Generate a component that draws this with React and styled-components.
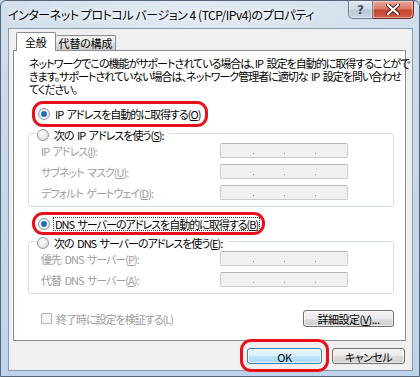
import { Fragment } from 'react';
import styled, { createGlobalStyle } from 'styled-components';

const GlobalStyle = createGlobalStyle`
  html, body {
    margin: 0;
    padding: 0;
    background: #c2d5ea;
  }
  body {
    font-family: "Noto Sans CJK JP", "Noto Sans", sans-serif;
    font-size: 11px;
    font-feature-settings: "palt";
    letter-spacing: -1px;
    word-spacing: 2px;
    color: #000;
  }
  * { box-sizing: border-box; }
`

const Window = styled.div`
  width: 420px;
  height: 377px;
  display: flex;
  flex-direction: column;
  border: 1px solid #55667a;
  border-radius: 6px 6px 0 0;
  background: linear-gradient(180deg, #d3dfec 0%, #c9d9ea 30%, #bfd4ec 100%);
  padding: 0 6px 5px 7px;
`

const TitleBar = styled.div`
  height: 27px;
  display: flex;
  align-items: flex-start;
  background: linear-gradient(90deg, rgba(255,255,255,0) 0%, rgba(255,255,255,0.35) 45%, rgba(255,255,255,0.1) 80%, rgba(255,255,255,0) 100%);
  margin: 0 -6px 0 -7px;
  padding: 0 6px 0 7px;
`

const Title = styled.div`
  font-size: 12px;
  letter-spacing: -0.45px;
  word-spacing: 0;
  line-height: 27px;
  white-space: nowrap;
  text-shadow: 0 0 5px #fff, 0 0 8px #fff;
`

const Captions = styled.div`
  margin-left: auto;
  margin-right: -1px;
  display: flex;
  height: 18px;
`

const CapButton = styled.div`
  width: ${p => p.$w}px;
  height: 18px;
  display: flex;
  align-items: center;
  justify-content: center;
  border: 1px solid ${p => p.$red ? '#6e2a22' : '#6b7a8c'};
  border-top: none;
  border-left-width: ${p => p.$red ? 0 : 1}px;
  border-radius: ${p => p.$red ? '0 0 5px 0' : '0 0 0 5px'};
  background: ${p => p.$red
    ? 'linear-gradient(180deg, #e8a89c 0%, #d77b69 45%, #c2452e 55%, #d35f43 100%)'
    : 'linear-gradient(180deg, #e3eaf2 0%, #cfd9e5 45%, #b9c7d6 55%, #c9d6e3 100%)'};
  box-shadow: inset 0 0 0 1px rgba(255,255,255,0.45);
  color: #44505e;
  font-family: "DejaVu Sans", sans-serif;
  font-weight: bold;
  font-size: 12px;
  letter-spacing: 0;
`

const Client = styled.div`
  flex: 1;
  display: flex;
  flex-direction: column;
  background: #f0f0f0;
  border: 1px solid #8a99ab;
  padding: 3px 6px 0 4px;
`

const TabsRow = styled.div`
  height: 18px;
  display: flex;
  align-items: flex-end;
  padding-left: 3px;
`

const Tab = styled.div`
  position: relative;
  z-index: ${p => p.$active ? 1 : 0};
  height: ${p => p.$active ? 19 : 15}px;
  margin-bottom: ${p => p.$active ? -1 : 0}px;
  padding: 0 ${p => p.$active ? 8 : 3}px;
  display: flex;
  align-items: center;
  border: 1px solid #898c95;
  border-bottom: none;
  border-left-width: ${p => p.$active ? 1 : 0}px;
  border-radius: 2px 2px 0 0;
  background: ${p => p.$active ? '#fff' : 'linear-gradient(180deg, #f2f2f2 0%, #ebebeb 50%, #dddddd 51%, #cfcfcf 100%)'};
  letter-spacing: -0.2px;
  white-space: nowrap;
`

const Panel = styled.div`
  flex: 1;
  display: flex;
  flex-direction: column;
  background: #fff;
  border: 1px solid #898c95;
  padding: 6px 11px 0 14px;
`

const Description = styled.div`
  margin-left: 1px;
  line-height: 13px;
  white-space: nowrap;
`

const Highlight = styled.div`
  align-self: flex-start;
  display: flex;
  align-items: center;
  height: ${p => p.$h}px;
  margin: ${p => p.$m};
  padding: ${p => p.$pad};
  border: 3px solid #e8101a;
  border-radius: 11px;
`

const Option = styled.label`
  display: flex;
  align-items: center;
  gap: 4px;
  height: 12px;
  white-space: nowrap;
  color: ${p => p.$disabled ? '#9d9d9d' : '#000'};
`

const OptionText = styled.span`
  line-height: 12px;
  outline: ${p => p.$focus ? '1px dotted #333' : 'none'};
  outline-offset: 0;
  padding: 0 1px;
`

const Radio = styled.span`
  width: 12px;
  height: 12px;
  border-radius: 50%;
  flex: none;
  border: 1px solid #8e9aa5;
  background: ${p => p.$checked
    ? 'radial-gradient(circle, #2a7fd0 0%, #1b5fa8 30%, #6aaee6 42%, #f2f2f2 46%, #dcdcdc 100%)'
    : 'radial-gradient(circle at 40% 35%, #ffffff 0%, #eaeaea 50%, #cfcfcf 100%)'};
`

const Group = styled.div`
  display: flex;
  flex-direction: column;
  margin-top: 6px;
  border: 1px solid #d5dfe5;
  border-radius: 3px;
  padding: 0 0 6px 12px;
`

const Legend = styled.div`
  align-self: flex-start;
  margin: -5px 0 0 -4px;
  padding: 0 4px 0 0;
  background: #fff;
`

const Rows = styled.div`
  display: grid;
  grid-template-columns: 179px 128px;
  grid-auto-rows: 15px;
  row-gap: 6px;
  align-items: center;
  margin-top: 2px;
`

const FieldLabel = styled.span`
  color: #9d9d9d;
  white-space: nowrap;
  line-height: 12px;
`

const IpBox = styled.div`
  height: 15px;
  display: flex;
  align-items: flex-end;
  padding: 0 0 3px 2px;
  background: #f0f0f0;
  border: 1px solid #cbcbcb;
  border-top-color: #b5b5b5;
  border-radius: 2px;
`

const Octet = styled.span`
  width: 30px;
`

const Dot = styled.span`
  width: 1px;
  height: 1px;
  background: #8a8a8a;
`

const BottomRow = styled.div`
  display: flex;
  align-items: center;
  margin-top: 16px;
  height: 17px;
`

const CheckBox = styled.span`
  width: 11px;
  height: 11px;
  flex: none;
  border: 1px solid #b9b9b9;
  background: #f4f4f4;
`

const CheckLabel = styled.label`
  display: flex;
  align-items: center;
  gap: 4px;
  margin-left: 13px;
  color: #9d9d9d;
  white-space: nowrap;
`

const Button = styled.button`
  width: ${p => p.$w}px;
  height: ${p => p.$h}px;
  margin-left: ${p => p.$ml || 0};
  padding: 0;
  font: inherit;
  font-feature-settings: "palt";
  letter-spacing: -0.5px;
  color: #000;
  white-space: nowrap;
  border: 1px solid ${p => p.$default ? '#3c7fb1' : '#707070'};
  border-radius: 3px;
  background: ${p => p.$default
    ? 'linear-gradient(180deg, #eaf6fd 0%, #d9f0fc 50%, #bee6fd 51%, #a7d9f5 100%)'
    : 'linear-gradient(180deg, #f2f2f2 0%, #ebebeb 50%, #dddddd 51%, #cfcfcf 100%)'};
  box-shadow: inset 0 0 0 1px ${p => p.$default ? 'rgba(255,255,255,0.7)' : 'rgba(255,255,255,0.6)'};
`

const Footer = styled.div`
  height: 29px;
  display: flex;
  align-items: center;
  justify-content: flex-end;
  padding-right: 1px;
`

const ipRows = [
  ['IP アドレス(', 'I', '):'],
  ['サブネット マスク(', 'U', '):'],
  ['デフォルト ゲートウェイ(', 'D', '):'],
];

const dnsRows = [
  ['優先 DNS サーバー(', 'P', '):'],
  ['代替 DNS サーバー(', 'A', '):'],
];

function IpField() {
  return (
    <IpBox>
      <Octet /><Dot /><Octet /><Dot /><Octet /><Dot />
    </IpBox>
  );
}

function FieldRows({ rows }) {
  return (
    <Rows>
      {rows.map(([a, key, b]) => (
        <Fragment key={key}>
          <FieldLabel>{a}<u>{key}</u>{b}</FieldLabel>
          <IpField />
        </Fragment>
      ))}
    </Rows>
  );
}

export default function App() {
  return (
    <>
      <GlobalStyle />
      <Window>
        <TitleBar>
          <Title>インターネット プロトコル バージョン 4 (TCP/IPv4)のプロパティ</Title>
          <Captions>
            <CapButton $w={25}>?</CapButton>
            <CapButton $w={41} $red>
              <svg width="14" height="11" viewBox="0 0 14 11">
                <path d="M2 1 L12 10 M12 1 L2 10" stroke="#4a1a14" strokeWidth="4" strokeLinecap="round" />
                <path d="M2 1 L12 10 M12 1 L2 10" stroke="#fff" strokeWidth="2.2" strokeLinecap="round" />
              </svg>
            </CapButton>
          </Captions>
        </TitleBar>
        <Client>
          <TabsRow>
            <Tab $active>全般</Tab>
            <Tab>代替の構成</Tab>
          </TabsRow>
          <Panel>
            <Description>
              ネットワークでこの機能がサポートされている場合は、IP 設定を自動的に取得することがで<br />
              きます。サポートされていない場合は、ネットワーク管理者に適切な IP 設定を問い合わせ<br />
              てください。
            </Description>

            <Highlight $h={26} $m="5px 0 0 4px" $pad="0 4px 0 3px">
              <Option>
                <Radio $checked />
                <OptionText>IP アドレスを自動的に取得する(<u>O</u>)</OptionText>
              </Option>
            </Highlight>

            <Group>
              <Legend>
                <Option>
                  <Radio />
                  <OptionText>次の IP アドレスを使う(<u>S</u>):</OptionText>
                </Option>
              </Legend>
              <FieldRows rows={ipRows} />
            </Group>

            <Highlight $h={23} $m="5px 0 0 4px" $pad="0 3px 0 3px">
              <Option>
                <Radio $checked />
                <OptionText $focus>DNS サーバーのアドレスを自動的に取得する(<u>B</u>)</OptionText>
              </Option>
            </Highlight>

            <Group>
              <Legend>
                <Option>
                  <Radio />
                  <OptionText>次の DNS サーバーのアドレスを使う(<u>E</u>):</OptionText>
                </Option>
              </Legend>
              <FieldRows rows={dnsRows} />
            </Group>

            <BottomRow>
              <CheckLabel>
                <CheckBox />
                終了時に設定を検証する(L)
              </CheckLabel>
              <Button $w={91} $h={17} $ml="auto">詳細設定(<u>V</u>)...</Button>
            </BottomRow>
          </Panel>
          <Footer>
            <Highlight $h={33} $m="-2px 0 -2px 0" $pad="0 4px 0 4px">
              <Button $w={75} $h={16} $default>OK</Button>
            </Highlight>
            <Button $w={73} $h={16} $ml="3px">キャンセル</Button>
          </Footer>
        </Client>
      </Window>
    </>
  );
}
